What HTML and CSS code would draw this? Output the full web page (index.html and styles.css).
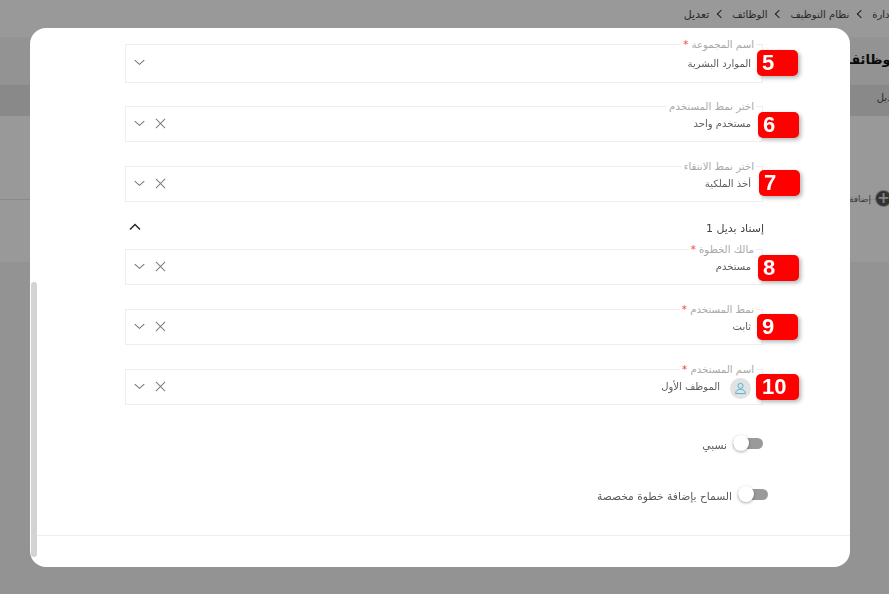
FILE: index.html
```html
<!DOCTYPE html>
<html lang="ar" dir="rtl">
<head>
<meta charset="utf-8">
<title>تعديل</title>
<link rel="stylesheet" href="styles.css">
</head>
<body>
<div class="page">
  <nav class="crumbs">
    <span>الإدارة</span><i class="sep"></i><span>نظام التوظيف</span><i class="sep"></i><span>الوظائف</span><i class="sep"></i><span class="last">تعديل</span>
  </nav>
  <div class="head"><h1>الوظائف</h1></div>
  <div class="tabs"><span>تعديل</span></div>
  <div class="panel">
    <div class="add"><span class="add-ic">+</span><span>إضافة</span></div>
  </div>
  <div class="panel2"></div>
</div>
<div class="backdrop"></div>
<div class="modal">
  <div class="scrollbar"></div>
  <div class="form">
    <div class="field f1">
      <label>اسم المجموعة <b>*</b></label>
      <span class="value">الموارد البشرية</span>
      <div class="actions"><svg class="ic" viewBox="0 0 12 12"><path d="M.8 3.500 6 8l5.200-4.500"/></svg></div>
      <span class="badge b5">5</span>
    </div>
    <div class="field f2">
      <label>اختر نمط المستخدم</label>
      <span class="value">مستخدم واحد</span>
      <div class="actions"><svg class="ic" viewBox="0 0 12 12"><path d="M.8 3.500 6 8l5.200-4.500"/></svg><svg class="ic x" viewBox="0 0 12 12"><path d="M1 1l10 10M11 1 1 11"/></svg></div>
      <span class="badge b6">6</span>
    </div>
    <div class="field f3">
      <label>اختر نمط الانتقاء</label>
      <span class="value">أخذ الملكية</span>
      <div class="actions"><svg class="ic" viewBox="0 0 12 12"><path d="M.8 3.500 6 8l5.200-4.500"/></svg><svg class="ic x" viewBox="0 0 12 12"><path d="M1 1l10 10M11 1 1 11"/></svg></div>
      <span class="badge b7">7</span>
    </div>
    <div class="section">
      <span>إسناد بديل 1</span>
      <svg class="up" viewBox="0 0 12 12"><path d="M1 8.500 6 3.500l5 5"/></svg>
    </div>
    <div class="field f4">
      <label>مالك الخطوة <b>*</b></label>
      <span class="value">مستخدم</span>
      <div class="actions"><svg class="ic" viewBox="0 0 12 12"><path d="M.8 3.500 6 8l5.200-4.500"/></svg><svg class="ic x" viewBox="0 0 12 12"><path d="M1 1l10 10M11 1 1 11"/></svg></div>
      <span class="badge b8">8</span>
    </div>
    <div class="field f5">
      <label>نمط المستخدم <b>*</b></label>
      <span class="value">ثابت</span>
      <div class="actions"><svg class="ic" viewBox="0 0 12 12"><path d="M.8 3.500 6 8l5.200-4.500"/></svg><svg class="ic x" viewBox="0 0 12 12"><path d="M1 1l10 10M11 1 1 11"/></svg></div>
      <span class="badge b9">9</span>
    </div>
    <div class="field f6">
      <label>اسم المستخدم <b>*</b></label>
      <span class="avatar"><svg viewBox="0 0 20 20"><circle cx="10" cy="6.500" r="3.400"/><path d="M3.500 16.800c0-3.700 2.800-5.800 6.500-5.800s6.500 2.100 6.500 5.800z"/></svg></span>
      <span class="value name">الموظف الأول</span>
      <div class="actions"><svg class="ic" viewBox="0 0 12 12"><path d="M.8 3.500 6 8l5.200-4.500"/></svg><svg class="ic x" viewBox="0 0 12 12"><path d="M1 1l10 10M11 1 1 11"/></svg></div>
      <span class="badge b10">10</span>
    </div>
    <div class="toggle t1"><span class="switch"><i></i></span><span class="tlabel">نسبي</span></div>
    <div class="toggle t2"><span class="switch"><i></i></span><span class="tlabel">السماح بإضافة خطوة مخصصة</span></div>
  </div>
  <div class="footer"></div>
</div>
</body>
</html>
```
FILE: styles.css
```css
* { box-sizing: border-box; }
html, body { margin: 0; height: 100%; overflow: hidden; }
body { font-family: "DejaVu Sans", "Noto Sans", sans-serif; background: #f5f5f5; color: #333; }

.page { height: 594px; overflow: hidden; }
.crumbs { height: 37px; background: #fff; display: flex; align-items: center; gap: 8.500px; padding: 0 0 9px; margin-right: -9px; font-size: 10px; color: #444; }
.crumbs .last { font-size: 11px; }
.sep { width: 6px; height: 6px; border-left: 1.500px solid #333; border-bottom: 1.500px solid #333; transform: rotate(45deg); }
.head { height: 48px; background: #f5f5f5; padding-top: 15px; margin-right: -11px; }
h1 { margin: 0; font-size: 13px; font-weight: 700; color: #111; }
.tabs { height: 31px; background: #e4e4e4; padding: 7px 0 0; margin-right: -11px; font-size: 10px; color: #444; }
.panel { height: 84px; background: #fff; border-bottom: 1px solid #e6e6e6; padding-top: 75px; }
.add { display: flex; align-items: center; gap: 5px; margin-right: -2px; font-size: 9px; color: #666; }
.add-ic { width: 15px; height: 15px; border-radius: 50%; background: #555; box-shadow: 0 0 0 1px #bbb; color: #ddd; font-size: 15px; line-height: 14px; text-align: center; font-weight: 700; }
.panel2 { height: 62px; background: #fff; }

.backdrop { position: fixed; inset: 0; background: rgba(0, 0, 0, .4); }
.modal { position: fixed; left: 30px; top: 28px; width: 820px; height: 539px; background: #fff; border-radius: 16px; overflow: hidden; direction: rtl; }
.scrollbar { position: absolute; left: 1px; top: 254px; width: 6px; height: 275px; background: #d3d3d3; border-radius: 3px; }
.form { width: 638px; margin-right: 87px; padding-top: 16px; }

.field { position: relative; border: 1px solid #eeeeee; display: flex; align-items: center; padding-right: 11px; }
.field label { position: absolute; right: 6px; top: -7px; background: #fff; padding: 0 2px; font-size: 10.200px; line-height: 13px; color: #a8a8a8; white-space: nowrap; }
.field label b { color: #f44336; font-weight: 400; }
.value { font-size: 10px; color: #5a5a5a; margin-top: -1px; }
.actions { margin: 0 auto 2px 0; display: flex; flex-direction: row-reverse; align-items: center; gap: 10px; padding-left: 8px; }
.ic { width: 11px; height: 11px; fill: none; stroke: #6d7470; stroke-width: 1.100; }
.x { stroke: #75807a; }

.f1 { height: 39px; margin-bottom: 23px; }
.f2 { height: 36px; margin-bottom: 24px; }
.f3 { height: 36px; }
.f4 { height: 36px; margin-bottom: 24px; }
.f5 { height: 36px; margin-bottom: 24px; }
.f6 { height: 36px; }

.section { height: 47px; display: flex; align-items: center; justify-content: space-between; padding: 9px 0 3px 4px; margin-right: -1px; font-size: 11px; color: #444; }
.up { width: 12px; height: 12px; fill: none; stroke: #222; stroke-width: 1.400; margin-bottom: 4px; }

.avatar { width: 21px; height: 21px; border-radius: 50%; background: #e2e2e2; display: flex; align-items: center; justify-content: center; margin: 2px 0 0 10px; }
.avatar svg { width: 15px; height: 15px; fill: none; stroke: #45b4dc; stroke-width: 1.300; }
.name { font-size: 10px; }

.badge { position: absolute; height: 26px; background: #ff0000; color: #fff; font-family: "Liberation Sans", sans-serif; font-weight: 700; font-size: 22px; line-height: 26px; border-radius: 5px; box-shadow: 2px 2px 4px rgba(0, 0, 0, .3); direction: ltr; text-align: left; }
.b5 { left: 631px; top: 5px; width: 41px; padding-left: 5px; }
.b6 { left: 632px; top: 5px; width: 41px; padding-left: 5px; }
.b7 { left: 633px; top: 3px; width: 41px; padding-left: 5px; }
.b8 { left: 632px; top: 5px; width: 41px; padding-left: 5px; }
.b9 { left: 631px; top: 4px; width: 41px; padding-left: 5px; }
.b10 { left: 630px; top: 4px; width: 43px; padding-left: 6px; }

.toggle { display: flex; align-items: center; gap: 6px; font-size: 10.700px; color: #5a5a5a; }
.tlabel { margin-top: 4px; }
.switch { position: relative; display: block; width: 30px; height: 11px; background: #9a9a9a; border-radius: 6px; }
.switch i { position: absolute; right: 14px; top: -3px; width: 16px; height: 16px; background: #fff; border-radius: 50%; box-shadow: 0 1px 3px rgba(0, 0, 0, .35); }
.t1 { margin-top: 30px; }
.t2 { margin-top: 34px; margin-right: -5px; }
.footer { position: absolute; left: 7px; right: 0; top: 507px; border-top: 1px solid #eeeeee; }
```
